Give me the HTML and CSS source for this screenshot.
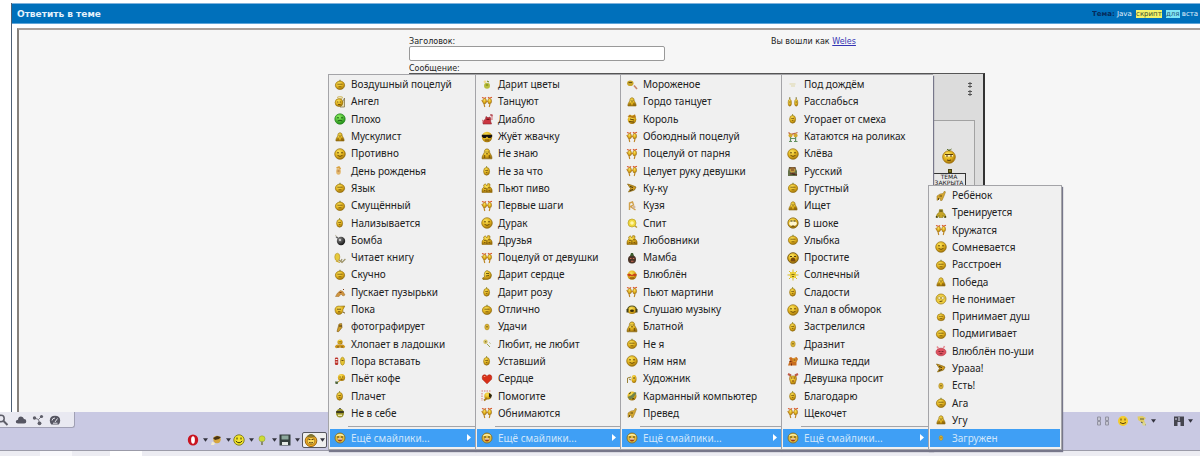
FILE: index.html
```html
<!DOCTYPE html>
<html lang="ru">
<head>
<meta charset="utf-8">
<title>Ответить в теме</title>
<link rel="stylesheet" href="styles.css">
</head>
<body>
<svg class="sprite" aria-hidden="true">
  <defs>
    <radialGradient id="gold" cx="40%" cy="30%" r="75%"><stop offset="0" stop-color="#fbe45c"/><stop offset=".55" stop-color="#e0b01c"/><stop offset="1" stop-color="#96690a"/></radialGradient>
    <radialGradient id="lime" cx="40%" cy="30%" r="75%"><stop offset="0" stop-color="#8cf060"/><stop offset="1" stop-color="#1c8a14"/></radialGradient>
    <radialGradient id="coal" cx="35%" cy="30%" r="75%"><stop offset="0" stop-color="#888"/><stop offset="1" stop-color="#111"/></radialGradient>
  </defs>
  <symbol id="face" viewBox="0 0 12 12"><circle cx="6" cy="6" r="5.3" fill="url(#gold)" stroke="#94700e" stroke-width=".7"/><path d="M3 4.8h2M7 4.8h2M3.500 7.400q2.500 2 5 0" fill="none" stroke="#5c4108" stroke-width=".9"/></symbol>
  <symbol id="mid" viewBox="0 0 12 12"><ellipse cx="6" cy="6.300" rx="4.600" ry="4.200" fill="url(#gold)" stroke="#94700e" stroke-width=".7"/><path d="M3.400 5.200h5.200M4.500 7.800h3" stroke="#6b4b08" stroke-width=".8"/><path d="M6 2V.8" stroke="#6f7a1a"/></symbol>
  <symbol id="small" viewBox="0 0 12 12"><ellipse cx="5.600" cy="6.300" rx="3" ry="3.900" fill="url(#gold)" stroke="#94700e" stroke-width=".6"/><path d="M4.200 5.400h2.800M4.800 7.400h1.600" stroke="#6b4b08" stroke-width=".8"/><path d="M5.600 2.600V1.200" stroke="#8a8a20"/></symbol>
  <symbol id="tiny" viewBox="0 0 12 12"><ellipse cx="6" cy="6" rx="2.200" ry="2.900" fill="#dcb637" stroke="#aa8420" stroke-width=".6"/><path d="M5 5.800h2" stroke="#6b5010" stroke-width=".8"/></symbol>
  <symbol id="pear" viewBox="0 0 12 12"><path d="M6 .9C8.300.9 8.600 3 8.700 4.500 9.500 6.500 11.300 8 10.900 10.800H1.100C.7 8 2.600 6.500 3.300 4.500 3.400 3 3.700.9 6 .9z" fill="url(#gold)" stroke="#8b690d" stroke-width=".7"/><path d="M4.400 4h1.200M6.600 4h1.200M3.700 7v3M8.300 7v3M5 5.800h2" stroke="#694b08" stroke-width=".9"/></symbol>
  <symbol id="pair" viewBox="0 0 12 12"><path d="M1 1.400l3 1L5 1.300M7 1.300l1.300 1 2.700-1" fill="none" stroke="#d9572a" stroke-width="1.100"/><ellipse cx="3.600" cy="5.200" rx="1.900" ry="2.800" fill="url(#gold)" stroke="#a4721a" stroke-width=".5"/><ellipse cx="8.700" cy="5.200" rx="1.900" ry="2.800" fill="url(#gold)" stroke="#a4721a" stroke-width=".5"/><path d="M3 8l.8 3M9 8l-.8 3M5 6l2-1M.8 4l1 2" stroke="#bd8420" stroke-width="1.100"/></symbol>
  <symbol id="duo" viewBox="0 0 12 12"><ellipse cx="2.800" cy="6.700" rx="1.700" ry="3.500" fill="url(#gold)" stroke="#a17d18" stroke-width=".5"/><ellipse cx="9.200" cy="6.700" rx="1.700" ry="3.500" fill="url(#gold)" stroke="#a17d18" stroke-width=".5"/><path d="M2.800 3V1.200M9.200 3V1.200M2 6h1.600M8.400 6H10" stroke="#6f6412" stroke-width=".9"/></symbol>
  <symbol id="friends" viewBox="0 0 12 12"><path d="M1 10.500Q.4 6 3 5l-.4-2L4.400 1.800 5.800 4l1-2.500L9 2l-.2 2.600q3 2 2.300 5.900z" fill="url(#gold)" stroke="#96700f" stroke-width=".6"/><path d="M3 6.300h2M7 5.800h2M5.900 6v4M3 8.600h1.500M7.500 8.600H9" stroke="#71500a" stroke-width=".9"/></symbol>
  <symbol id="wave" viewBox="0 0 12 12"><path d="M1 5q1-3.500 5-2.800L10.800 2 9 5.500q0 5-4.600 5Q1 10 1 5z" fill="url(#gold)" stroke="#91700f" stroke-width=".6"/><path d="M3 5.200h4M4 7.800h2.400M9 8l2 1.200" stroke="#65480b" stroke-width=".9"/></symbol>
  <symbol id="gift" viewBox="0 0 12 12"><path d="M6 1.500q4 1 4.500 4.500 0 4-4 4.500H2L1.500 9l2-1Q2.500 2.500 6 1.500z" fill="url(#gold)" stroke="#88700f" stroke-width=".6"/><path d="M5 4.500h3M5 7l3-.5" stroke="#5e4d0b" stroke-width=".9"/></symbol>
  <symbol id="run" viewBox="0 0 12 12"><circle cx="4" cy="4" r="2.500" fill="#e5b52a"/><path d="M5 5.600l3 1.200 2.800 3M5 6.600L2 10.400M7 7l-1 3.600" fill="none" stroke="#be8b22" stroke-width="1.600"/><path d="M3 3.600h2M9 3l1 1" stroke="#72510c"/></symbol>
  <symbol id="bubbles" viewBox="0 0 12 12"><path d="M1.500 10.500l2-3.500 3-2.500L9 5.500l2 3.500-2 1-2-2-2 2.500z" fill="#cf9440" stroke="#a1702a" stroke-width=".5"/><path d="M5.500 6.500h2M9 3.500h1" stroke="#7b3c12"/></symbol>
  <symbol id="flower" viewBox="0 0 12 12"><circle cx="6" cy="6.700" r="3" fill="#b9bd3c"/><circle cx="4" cy="2.800" r="1.400" fill="#f1dc91"/><path d="M4.800 6h2.400M6 2l2 1" stroke="#697a17"/></symbol>
  <symbol id="angel" viewBox="0 0 12 12"><path d="M10.500 2v9H6z" fill="#e9dfb1" stroke="#837549" stroke-width=".8"/><circle cx="5" cy="6.600" r="3.900" fill="url(#gold)" stroke="#95700e" stroke-width=".6"/><ellipse cx="6" cy="1.600" rx="2.800" ry=".9" fill="none" stroke="#c3a638" stroke-width=".8"/><path d="M3 6h1.400M5.800 6h1.400M4 8.500h2.600" stroke="#60430a" stroke-width=".8"/></symbol>
  <symbol id="green" viewBox="0 0 12 12"><circle cx="6" cy="6" r="5.200" fill="url(#lime)" stroke="#23831b" stroke-width=".7"/><path d="M3 4.800h2M7 4.800h2M3.700 8q2.300-1.600 4.600 0" fill="none" stroke="#17520f" stroke-width=".9"/></symbol>
  <symbol id="devil" viewBox="0 0 12 12"><path d="M2 11Q2 7 4.600 6L5 3.500l2 1.300L9 4q1.500 2 .5 4l1 3z" fill="#cb3540" stroke="#8b252d" stroke-width=".6"/><path d="M11 1v6M9.800 1v1.800h2M1 7l1.600 1M1 9h2" stroke="#cf5b65" stroke-width=".9"/><path d="M5.500 6.300h3" stroke="#5c090e"/></symbol>
  <symbol id="cool" viewBox="0 0 12 12"><circle cx="6" cy="6" r="5.200" fill="url(#gold)"/><path d="M.8 3.800h10.400v1.800L9.600 7H7.300L6 5.400 4.700 7H2.400L.8 5.600z" fill="#171310"/><path d="M4 9h4" stroke="#71490a" stroke-width=".9"/></symbol>
  <symbol id="bomb" viewBox="0 0 12 12"><circle cx="7" cy="7" r="4.200" fill="url(#coal)"/><path d="M3.800 4.200L2 2.600" stroke="#555" stroke-width="1.400"/><path d="M1 1l1.800 1.400" stroke="#c6c1ac"/><circle cx="6" cy="6" r="1.100" fill="#ddd"/></symbol>
  <symbol id="book" viewBox="0 0 12 12"><ellipse cx="3.300" cy="5" rx="2.500" ry="3.800" fill="#e6c93c" stroke="#b08f1f" stroke-width=".6"/><path d="M5 8l3 2.400L11.400 7M7 9l1-2" fill="none" stroke="#9b9268" stroke-width="1.200"/><path d="M2 9l4 1.500" stroke="#cba62a" stroke-width="1.300"/></symbol>
  <symbol id="cam" viewBox="0 0 12 12"><path d="M3 10.500L5 3l2.600-.5.4 4-3.400 4.200z" fill="#cf9e28" stroke="#7d5810" stroke-width=".6"/><path d="M5 5h3" stroke="#44310c"/></symbol>
  <symbol id="clap" viewBox="0 0 12 12"><circle cx="6" cy="4" r="2.600" fill="url(#gold)"/><path d="M.8 8.800q1.400-2.800 4-2h2.400q2.600-.8 4 2-1 2-3 1H3.800q-2 1-3-1z" fill="#cc951e"/><path d="M4.500 3.800h3M4 8v2M8 8v2" stroke="#694707" stroke-width=".8"/></symbol>
  <symbol id="train" viewBox="0 0 12 12"><path d="M1 10.500q.5-4 3-5L4.500 2.500h3l.5 3q2.500 1 3 5l-2-.5L8 8v2.500H4V8l-1 2z" fill="#c7a528" stroke="#7e7512" stroke-width=".5"/><path d="M4.500 4h3M1 9.500l1.500 1M11 9.500l-1.500 1" stroke="#2f3010" stroke-width="1.200"/></symbol>
  <symbol id="wake" viewBox="0 0 12 12"><rect x=".9" y="2.500" width="3.300" height="7.500" rx="1.200" fill="#bc342c"/><path d="M1.500 4.500h2M1.500 7h2" stroke="#fff"/><ellipse cx="8.500" cy="6.200" rx="2" ry="4" fill="#e6c534" stroke="#ae8b16" stroke-width=".7"/><path d="M7.500 5.500h2" stroke="#6b5010"/></symbol>
  <symbol id="coffee" viewBox="0 0 12 12"><circle cx="7.500" cy="4.500" r="3.600" fill="url(#gold)"/><path d="M5.500 4h1.300M8 4h1.300M6.500 6.200h2" stroke="#5e430b" stroke-width=".9"/><path d="M1 8.500h3.300l-.6 2.500H1.600z" fill="#52683e"/><path d="M4 9l2-1.500" stroke="#c99f23"/></symbol>
  <symbol id="crazy" viewBox="0 0 12 12"><ellipse cx="6" cy="6.200" rx="4" ry="4.400" fill="#98922b"/><path d="M2.200 4h7.600v2H2.200z" fill="#3c3b20"/><path d="M4 8.300h4" stroke="#eee9b0" stroke-width="1.500"/><path d="M5 1.500h2" stroke="#666"/></symbol>
  <symbol id="heart" viewBox="0 0 12 12"><path d="M6 10.800L1.500 6.300Q.5 2 3.500 1.800 5.300 1.800 6 3.400 6.700 1.800 8.500 1.800 11.500 2 10.500 6.300z" fill="#d82f18" stroke="#a71c0d" stroke-width=".6"/><path d="M2.800 3.500h1.500" stroke="#ff9a72"/></symbol>
  <symbol id="help" viewBox="0 0 12 12"><path d="M.5 1h9M1 3v8" stroke="#d8746e" stroke-dasharray="1.500 1"/><circle cx="6.800" cy="6" r="3.500" fill="url(#gold)"/><path d="M8 3l3 2-1 3-2-1z" fill="#2c2510"/><path d="M3 10.500L6 8" stroke="#a87a1b" stroke-width="1.800"/></symbol>
  <symbol id="party" viewBox="0 0 12 12"><ellipse cx="4.500" cy="6.500" rx="2.300" ry="3.300" fill="#e3b66a"/><path d="M2.500 3L5 2l1.500 2" stroke="#d9a13f" stroke-width="1.500" fill="none"/><path d="M3.500 6h2" stroke="#a36a3c"/></symbol>
  <symbol id="daisy" viewBox="0 0 12 12"><circle cx="4.500" cy="3.800" r="2.200" fill="#d8c465"/><path d="M6 6l3 3M8.500 4.500l.8 1" stroke="#9ca35a" stroke-width="1"/><path d="M4 3.800h1.300" stroke="#6b6230"/></symbol>
  <symbol id="ice" viewBox="0 0 12 12"><ellipse cx="4.300" cy="4.300" rx="3.200" ry="2.800" fill="#c8a52b"/><path d="M2.600 3.500h3.500" stroke="#665012"/><path d="M8 6.500l3 3.500" stroke="#c78568" stroke-width="1.600"/></symbol>
  <symbol id="crown" viewBox="0 0 12 12"><circle cx="6" cy="6.600" r="4.300" fill="url(#gold)"/><path d="M1.500 3.500L4 1.500l2 1.700 3-2 1 3.300-3.500.5z" fill="#b77a12"/><path d="M4 6l4 1M3 8.500l5 .6" stroke="#5c3f09"/></symbol>
  <symbol id="bird" viewBox="0 0 12 12"><path d="M1.500 2l5 1.500 3.500 1.500L8.500 8 2.500 10l2-3.500z" fill="#cf9a20" stroke="#826009" stroke-width=".7"/><path d="M4 4.500l3 1M4 8.500l3-1" stroke="#3e350f"/></symbol>
  <symbol id="bear" viewBox="0 0 12 12"><path d="M2 10.500V6l3-2 3-.5L9.500 1l1 1-1.500 4-2 4.500H5.500L5 8z" fill="#d3a630" stroke="#96731c" stroke-width=".5"/><path d="M4.500 6h2.500M3.500 8v2" stroke="#5f4a10"/></symbol>
  <symbol id="kuzya" viewBox="0 0 12 12"><path d="M3.500 10V3l3-1 1 3-3 1.500L9.500 10" fill="none" stroke="#d1a14b" stroke-width="1.400"/><circle cx="8" cy="7" r="1.500" fill="#d5b9a1"/></symbol>
  <symbol id="sleep" viewBox="0 0 12 12"><circle cx="6" cy="6" r="4" fill="#f0d83c" stroke="#b89d26" stroke-width=".7"/><circle cx="6" cy="6" r="1.800" fill="#fff6a9"/><path d="M9 9l2 1.500" stroke="#bc9a32" stroke-width="1.500"/></symbol>
  <symbol id="mamba" viewBox="0 0 12 12"><circle cx="6" cy="7.500" r="4" fill="#4b3427"/><path d="M4 4l1-3h2l1 3z" fill="#3c5a2e"/><path d="M4 6.500h1.500M6.800 6.500h1.500M5 9.200h2.500" stroke="#ce6a54" stroke-width="1.100"/></symbol>
  <symbol id="love" viewBox="0 0 12 12"><circle cx="6" cy="6.200" r="4.600" fill="url(#gold)"/><path d="M1 5.500l2.500-1L6 6l2.500-1.500 2.500 1L9 7.500 7 6.800 6 7.500 5 6.800 3 7.500z" fill="#c9431b"/><path d="M4 9h4" stroke="#843f0a"/></symbol>
  <symbol id="music" viewBox="0 0 12 12"><ellipse cx="6" cy="6.200" rx="4.800" ry="3.900" fill="url(#gold)"/><path d="M1.500 6Q2 2 6 2t4.500 4" fill="none" stroke="#55521a" stroke-width="1.200"/><path d="M1.500 5v3.500M10.500 5v3.500" stroke="#45421a" stroke-width="2"/><ellipse cx="6" cy="6.800" rx="2" ry="1.300" fill="#392c0a"/></symbol>
  <symbol id="artist" viewBox="0 0 12 12"><ellipse cx="8" cy="6" rx="2.500" ry="4" fill="url(#gold)"/><path d="M1.500 10V5L5 4M5 7L3 6" fill="none" stroke="#9a8236" stroke-width="1"/><path d="M7 5h2" stroke="#5b4208"/></symbol>
  <symbol id="pda" viewBox="0 0 12 12"><circle cx="6" cy="6" r="4.500" fill="url(#gold)"/><path d="M1.500 7L5 5.500 9 2l1.500 1-3 4.500-3.500 2z" fill="#71844c"/><path d="M3 4l2-1.500M6 9l2-.5" stroke="#433d12"/></symbol>
  <symbol id="rain" viewBox="0 0 12 12"><path d="M2.500 5h6M4 7h4" stroke="#ded7a9"/></symbol>
  <symbol id="soldier" viewBox="0 0 12 12"><path d="M1 6l1-4h6l2 4v5H1z" fill="#66714a"/><circle cx="5.500" cy="5" r="2.800" fill="#c19b3f"/><path d="M2 3h7M4 5h3M3 9l3-1 4 2" stroke="#6e3b28" stroke-width="1.100"/></symbol>
  <symbol id="shock" viewBox="0 0 12 12"><circle cx="6" cy="6" r="5.200" fill="url(#gold)" stroke="#7c5e12" stroke-width=".7"/><ellipse cx="6" cy="6.500" rx="3.800" ry="2.300" fill="#fff6cf"/><path d="M3.500 4h2M6.500 4h2" stroke="#333"/><path d="M4 9.500q2-2 4 0z" fill="#3e2b06"/></symbol>
  <symbol id="more" viewBox="0 0 12 12"><circle cx="6" cy="6" r="5" fill="#e2b93a" stroke="#7c6a22" stroke-width=".8"/><path d="M2.500 3.800q3.500-2 7 0" stroke="#fbefa4" stroke-width="1.400" fill="none"/><path d="M3 5h2M7 5h2" stroke="#4d3b0c"/><path d="M3.500 6.800h5q-.3 2.700-2.500 2.700T3.500 6.800z" fill="#9a3a16"/><path d="M4 7h4" stroke="#fff"/></symbol>
  <symbol id="cry" viewBox="0 0 12 12"><circle cx="6" cy="6" r="5.300" fill="url(#gold)" stroke="#73560e" stroke-width=".9"/><path d="M3 4.500h2M7 4.500h2" stroke="#53400c"/><path d="M3.500 9.500q0-4 2.500-4t2.500 4z" fill="#7a4a0b"/></symbol>
  <symbol id="sun" viewBox="0 0 12 12"><path d="M6 .5v11M.5 6h11M2 2l8 8M10 2l-8 8" stroke="#dbbd25" stroke-width="1"/><circle cx="6" cy="6" r="3.200" fill="#edcf35"/><path d="M4.500 5.500h3M5 7.500h2" stroke="#6c5a10" stroke-width=".8"/></symbol>
  <symbol id="teddy" viewBox="0 0 12 12"><path d="M1 10.500L3 5l-1-2 2-1 2 1.500L9.500 2l1.500 2-1.500 3v3.500z" fill="#c86d20"/><circle cx="7.500" cy="5" r="2" fill="#e0a32c"/><path d="M2.500 6.500h2M6.500 5h2M4.500 8.500v2" stroke="#7b2c12"/></symbol>
  <symbol id="girl" viewBox="0 0 12 12"><path d="M1 1l3 1.500M11 1L8 2.500" stroke="#bf5946" stroke-width="2"/><path d="M3 3h6l.5 3L8 11H4L2.500 6z" fill="url(#gold)" stroke="#986419" stroke-width=".6"/><path d="M4 5h1.500M6.500 5H8M5 8h2" stroke="#7b3a12"/></symbol>
  <symbol id="skate" viewBox="0 0 12 12"><path d="M1.500 1.500L4 3.500l4-1 2.500-1" stroke="#be6440" stroke-width="1.300" fill="none"/><circle cx="3.500" cy="4.500" r="2" fill="#d3a82e"/><circle cx="8.600" cy="4.500" r="2" fill="#d3a82e"/><path d="M3.500 6v5M8.600 6v5M2 10.500h3M7 10.500h3.500M3.500 7.500h5" stroke="#629060" stroke-width="1.200"/></symbol>
  <symbol id="pink" viewBox="0 0 12 12"><ellipse cx="6" cy="7" rx="5" ry="3.800" fill="#dd5260" stroke="#b72d3e" stroke-width=".6"/><path d="M2 1.500l1.500 2M9.500 1l-1 2" stroke="#e58992" stroke-width="1.500"/><path d="M3.500 6.500h2M6.500 6.500h2M4.500 8.700h3" stroke="#7e2631"/></symbol>
  <symbol id="doubt" viewBox="0 0 12 12"><circle cx="6" cy="6" r="5" fill="#f0cf40" stroke="#a38217" stroke-width=".8"/><circle cx="4.200" cy="5" r="1.400" fill="#fff4c4" stroke="#8b741c" stroke-width=".5"/><circle cx="7.800" cy="5" r="1.400" fill="#fff4c4" stroke="#8b741c" stroke-width=".5"/><path d="M4.500 8.600L7.500 8" stroke="#654c09"/></symbol>
  <symbol id="grin" viewBox="0 0 14 14"><circle cx="7" cy="7.800" r="5.800" fill="#f2a81f" stroke="#8f5d0c" stroke-width=".9"/><path d="M2.500 4.500Q4 1 7 1t4.500 3.500Q7 2.800 2.500 4.500z" fill="#7e7434"/><ellipse cx="7" cy="8" rx="3.900" ry="3.600" fill="#fbd95a" stroke="#7c5710" stroke-width=".6"/><path d="M4.500 6.500h2M7.500 6.500h2M5 9.500q2 1 4 0" fill="none" stroke="#5d3f0b"/></symbol>
  <symbol id="arrow" viewBox="0 0 4 7"><path d="M0 0l4 3.500L0 7z" fill="currentColor"/></symbol>
  <symbol id="caret" viewBox="0 0 6 4"><path d="M0 0h6L3 4z" fill="#33333f"/></symbol>
  <symbol id="smile" viewBox="0 0 12 12"><circle cx="6" cy="6" r="5.200" fill="#f4e52b" stroke="#77751c" stroke-width=".9"/><path d="M4 3.500v2M8 3.500v2M2.800 7q3.200 3.600 6.400 0" fill="none" stroke="#333008" stroke-width="1"/></symbol>
  <symbol id="mark" viewBox="0 0 4 6"><path d="M2 0v6M0 1.500h4M0 4.500h4" stroke="#555"/></symbol>
</svg>

<main class="frame">
  <header class="bar">
    <h1 class="bar-title">Ответить в теме</h1>
    <p class="topic"><b>Тема:</b> Java <mark class="hit-yellow">скрипт</mark> <mark class="hit-cyan">для</mark> вста</p>
  </header>
  <form class="panel">
    <div class="fields">
      <label class="label" for="subject">Заголовок:</label>
      <input class="subject" id="subject" type="text">
      <span class="label label-message">Сообщение:</span>
    </div>
    <p class="login">Вы вошли как <a href="#weles">Weles</a></p>
    <section class="editor">
      <div class="marks">
        <svg class="mark"><use href="#mark"/></svg>
        <svg class="mark"><use href="#mark"/></svg>
      </div>
      <div class="smileys">
        <svg class="smiley" viewBox="0 0 14 16"><circle cx="7" cy="9" r="6.300" fill="url(#gold)" stroke="#a6720b" stroke-width=".8"/><path d="M5 1l2 2 2.500-2M7 1v2" stroke="#61702a" fill="none"/><path d="M3 7.500h8" stroke="#fff3be" stroke-width="2"/><path d="M3 6.500h8M4 8h2M8 8h2M5 12q2 1 4 0" stroke="#5b3d08" fill="none"/></svg>
        <svg class="head" viewBox="0 0 6 4"><path d="M1 0h4v4H1z" fill="#4a420f"/><path d="M2 2h2" stroke="#c9b83c"/></svg>
        <p class="sign">ТЕМА ЗАКРЫТА</p>
      </div>
    </section>
  </form>
</main>

<footer class="dock">
  <div class="tabs">
    <button class="tool" type="button" aria-label="Поиск"><svg class="tab-icon tab-search" viewBox="0 0 12 12"><circle cx="4" cy="4.500" r="3.200" fill="none" stroke="#5d5d68" stroke-width="1.500"/><path d="M6.500 7l4 4" stroke="#5d5d68" stroke-width="2"/></svg></button>
    <button class="tool" type="button" aria-label="Облако"><svg class="tab-icon" viewBox="0 0 12 12"><path d="M3 9.500Q.6 9.500.8 7.500 1 5.800 3 5.800 3.200 2.500 6 2.500 8.300 2.500 9 5q2.300 0 2.300 2.300T9 9.500z" fill="#565662"/></svg></button>
    <button class="tool" type="button" aria-label="Связь"><svg class="tab-icon" viewBox="0 0 12 12"><path d="M2.500 4l4 1.500 3-3M6.500 5.500l1 4" stroke="#777782" fill="none"/><circle cx="2.500" cy="4" r="1.700" fill="#5d5d68"/><circle cx="9.500" cy="2.500" r="1.600" fill="#5d5d68"/><circle cx="7.500" cy="9.300" r="1.900" fill="#5d5d68"/></svg></button>
    <button class="tool" type="button" aria-label="Турбо"><svg class="tab-icon" viewBox="0 0 12 12"><path d="M2.300 10.500Q.8 8.800.8 6.700.8 1.700 6 1.700t5.200 5q0 2.100-1.500 3.800z" fill="#565662"/><path d="M3 6.500Q3.300 4 6 4M6 8l2.500-3.500M4 9.200h4.500" stroke="#e6e6ee" fill="none"/></svg></button>
  </div>
  <div class="quick">
    <button class="tool" type="button" aria-label="Опера"><svg class="icon" viewBox="0 0 12 12"><ellipse cx="6" cy="6" rx="5.200" ry="5.600" fill="#c91420"/><ellipse cx="6" cy="6" rx="1.900" ry="3.700" fill="#fff"/></svg><svg class="caret"><use href="#caret"/></svg></button>
    <button class="tool" type="button" aria-label="Правка"><svg class="icon" viewBox="0 0 12 12"><circle cx="7" cy="5.500" r="3.700" fill="#d6a63d"/><path d="M3 4l4-2 4 1-2 2-4 1z" fill="#493414"/><path d="M1 11l1-3.500 3 1.500L4 11z" fill="#f3ebd0"/></svg><svg class="caret"><use href="#caret"/></svg></button>
    <button class="tool" type="button" aria-label="Смайлы"><svg class="icon"><use href="#smile"/></svg><svg class="caret"><use href="#caret"/></svg></button>
    <button class="tool" type="button" aria-label="Идея"><svg class="icon" viewBox="0 0 12 12"><circle cx="6" cy="4.800" r="3" fill="#cddb35" stroke="#94a52c" stroke-width=".6"/><path d="M6 7.500v3.500" stroke="#8a8a70" stroke-width="2"/></svg><svg class="caret"><use href="#caret"/></svg></button>
    <button class="tool" type="button" aria-label="Сохранить"><svg class="icon" viewBox="0 0 12 12"><path d="M.5.500h11v11H.5z" fill="#333d3c"/><path d="M2.500 1.500h7v4h-7z" fill="#8ba79b"/><path d="M3 8h6v3H3z" fill="#e3e8e4"/></svg><svg class="caret"><use href="#caret"/></svg></button>
    <button class="tool tool-open" type="button" aria-label="Смайлики"><svg class="icon-big"><use href="#grin"/></svg><svg class="caret"><use href="#caret"/></svg></button>
  </div>
  <div class="side">
    <svg class="grip" viewBox="0 0 14 10"><path d="M1.500 1h3v3.500h-3zM1.500 5.500h3V9h-3zM9.500 1h3v3.500h-3zM9.500 5.500h3V9h-3z" fill="#c6c6d2" stroke="#9292a2"/></svg>
    <button class="tool" type="button" aria-label="Смайл"><svg class="side-icon" viewBox="0 0 12 12"><circle cx="6" cy="6" r="5" fill="#f3cc2e"/><path d="M4 3.500v2M8 3.500v2M3 7.500q3 2.500 6 0" stroke="#5d450c" fill="none"/></svg></button>
    <button class="tool" type="button" aria-label="Цвет"><svg class="side-icon" viewBox="0 0 12 12"><path d="M1.500 1.500l5-.5 3.500 2-2 2 1 3-4-1-3-2z" fill="#e1cc62"/><path d="M4 4h4M5 7l5 3" stroke="#5f5d30"/><circle cx="8" cy="9" r="1.800" fill="#ddd78a"/></svg><svg class="caret"><use href="#caret"/></svg></button>
    <button class="tool" type="button" aria-label="Вид"><svg class="side-icon" viewBox="0 0 12 12"><path d="M1 1.500h10V11H7.500V7h-3v4H1z" fill="#45454f"/><path d="M6 2v4M3 3v2" stroke="#c5c5d6" stroke-width="1.200"/></svg><svg class="caret"><use href="#caret"/></svg></button>
  </div>
</footer>
<div class="taskbar"><span class="task"></span><span class="task task-active"></span></div>

<nav class="menus" aria-label="Смайлики">
  <section class="menu menu-a">
    <ul class="list">
      <li><button class="item"><svg class="icon"><use href="#mid"/></svg>Воздушный поцелуй</button></li>
      <li><button class="item"><svg class="icon"><use href="#angel"/></svg>Ангел</button></li>
      <li><button class="item"><svg class="icon"><use href="#green"/></svg>Плохо</button></li>
      <li><button class="item"><svg class="icon icon-less"><use href="#pear"/></svg>Мускулист</button></li>
      <li><button class="item"><svg class="icon"><use href="#face"/></svg>Противно</button></li>
      <li><button class="item"><svg class="icon"><use href="#party"/></svg>День рожденья</button></li>
      <li><button class="item"><svg class="icon"><use href="#mid"/></svg>Язык</button></li>
      <li><button class="item"><svg class="icon"><use href="#mid"/></svg>Смущённый</button></li>
      <li><button class="item"><svg class="icon"><use href="#small"/></svg>Нализывается</button></li>
      <li><button class="item"><svg class="icon"><use href="#bomb"/></svg>Бомба</button></li>
      <li><button class="item"><svg class="icon"><use href="#book"/></svg>Читает книгу</button></li>
      <li><button class="item"><svg class="icon"><use href="#mid"/></svg>Скучно</button></li>
      <li><button class="item"><svg class="icon"><use href="#bubbles"/></svg>Пускает пузырьки</button></li>
      <li><button class="item"><svg class="icon"><use href="#wave"/></svg>Пока</button></li>
      <li><button class="item"><svg class="icon"><use href="#cam"/></svg>фотографирует</button></li>
      <li><button class="item"><svg class="icon"><use href="#clap"/></svg>Хлопает в ладошки</button></li>
      <li><button class="item"><svg class="icon"><use href="#wake"/></svg>Пора вставать</button></li>
      <li><button class="item"><svg class="icon"><use href="#coffee"/></svg>Пьёт кофе</button></li>
      <li><button class="item"><svg class="icon"><use href="#small"/></svg>Плачет</button></li>
      <li><button class="item"><svg class="icon"><use href="#crazy"/></svg>Не в себе</button></li>
    </ul>
    <hr class="rule">
    <button class="item item-on"><svg class="icon"><use href="#more"/></svg>Ещё смайлики...<svg class="arrow"><use href="#arrow"/></svg></button>
  </section>

  <section class="menu menu-b">
    <ul class="list">
      <li><button class="item"><svg class="icon"><use href="#flower"/></svg>Дарит цветы</button></li>
      <li><button class="item"><svg class="icon"><use href="#pair"/></svg>Танцуют</button></li>
      <li><button class="item"><svg class="icon"><use href="#devil"/></svg>Диабло</button></li>
      <li><button class="item"><svg class="icon"><use href="#cool"/></svg>Жуёт жвачку</button></li>
      <li><button class="item"><svg class="icon"><use href="#pear"/></svg>Не знаю</button></li>
      <li><button class="item"><svg class="icon"><use href="#small"/></svg>Не за что</button></li>
      <li><button class="item"><svg class="icon"><use href="#friends"/></svg>Пьют пиво</button></li>
      <li><button class="item"><svg class="icon"><use href="#pair"/></svg>Первые шаги</button></li>
      <li><button class="item"><svg class="icon"><use href="#face"/></svg>Дурак</button></li>
      <li><button class="item"><svg class="icon"><use href="#friends"/></svg>Друзья</button></li>
      <li><button class="item"><svg class="icon"><use href="#pair"/></svg>Поцелуй от девушки</button></li>
      <li><button class="item"><svg class="icon"><use href="#gift"/></svg>Дарит сердце</button></li>
      <li><button class="item"><svg class="icon"><use href="#small"/></svg>Дарит розу</button></li>
      <li><button class="item"><svg class="icon"><use href="#mid"/></svg>Отлично</button></li>
      <li><button class="item"><svg class="icon"><use href="#tiny"/></svg>Удачи</button></li>
      <li><button class="item"><svg class="icon"><use href="#daisy"/></svg>Любит, не любит</button></li>
      <li><button class="item"><svg class="icon"><use href="#small"/></svg>Уставший</button></li>
      <li><button class="item"><svg class="icon"><use href="#heart"/></svg>Сердце</button></li>
      <li><button class="item"><svg class="icon"><use href="#help"/></svg>Помогите</button></li>
      <li><button class="item"><svg class="icon"><use href="#pair"/></svg>Обнимаются</button></li>
    </ul>
    <hr class="rule">
    <button class="item item-on"><svg class="icon"><use href="#more"/></svg>Ещё смайлики...<svg class="arrow"><use href="#arrow"/></svg></button>
  </section>

  <section class="menu menu-c">
    <ul class="list">
      <li><button class="item"><svg class="icon"><use href="#ice"/></svg>Мороженое</button></li>
      <li><button class="item"><svg class="icon icon-less"><use href="#pear"/></svg>Гордо танцует</button></li>
      <li><button class="item"><svg class="icon"><use href="#crown"/></svg>Король</button></li>
      <li><button class="item"><svg class="icon"><use href="#pair"/></svg>Обоюдный поцелуй</button></li>
      <li><button class="item"><svg class="icon"><use href="#pair"/></svg>Поцелуй от парня</button></li>
      <li><button class="item"><svg class="icon"><use href="#pair"/></svg>Целует руку девушки</button></li>
      <li><button class="item"><svg class="icon"><use href="#bird"/></svg>Ку-ку</button></li>
      <li><button class="item"><svg class="icon"><use href="#kuzya"/></svg>Кузя</button></li>
      <li><button class="item"><svg class="icon"><use href="#sleep"/></svg>Спит</button></li>
      <li><button class="item"><svg class="icon"><use href="#friends"/></svg>Любовники</button></li>
      <li><button class="item"><svg class="icon"><use href="#mamba"/></svg>Мамба</button></li>
      <li><button class="item"><svg class="icon"><use href="#love"/></svg>Влюблён</button></li>
      <li><button class="item"><svg class="icon"><use href="#pair"/></svg>Пьют мартини</button></li>
      <li><button class="item"><svg class="icon"><use href="#music"/></svg>Слушаю музыку</button></li>
      <li><button class="item"><svg class="icon"><use href="#pear"/></svg>Блатной</button></li>
      <li><button class="item"><svg class="icon"><use href="#mid"/></svg>Не я</button></li>
      <li><button class="item"><svg class="icon"><use href="#face"/></svg>Ням ням</button></li>
      <li><button class="item"><svg class="icon"><use href="#artist"/></svg>Художник</button></li>
      <li><button class="item"><svg class="icon"><use href="#pda"/></svg>Карманный компьютер</button></li>
      <li><button class="item"><svg class="icon"><use href="#bear"/></svg>Превед</button></li>
    </ul>
    <hr class="rule">
    <button class="item item-on"><svg class="icon"><use href="#more"/></svg>Ещё смайлики...<svg class="arrow"><use href="#arrow"/></svg></button>
  </section>

  <section class="menu menu-d">
    <ul class="list">
      <li><button class="item"><svg class="icon"><use href="#rain"/></svg>Под дождём</button></li>
      <li><button class="item"><svg class="icon"><use href="#duo"/></svg>Расслабься</button></li>
      <li><button class="item"><svg class="icon"><use href="#small"/></svg>Угорает от смеха</button></li>
      <li><button class="item"><svg class="icon"><use href="#skate"/></svg>Катаются на роликах</button></li>
      <li><button class="item"><svg class="icon"><use href="#face"/></svg>Клёва</button></li>
      <li><button class="item"><svg class="icon"><use href="#soldier"/></svg>Русский</button></li>
      <li><button class="item"><svg class="icon"><use href="#mid"/></svg>Грустный</button></li>
      <li><button class="item"><svg class="icon icon-less"><use href="#pear"/></svg>Ищет</button></li>
      <li><button class="item"><svg class="icon"><use href="#shock"/></svg>В шоке</button></li>
      <li><button class="item"><svg class="icon"><use href="#mid"/></svg>Улыбка</button></li>
      <li><button class="item"><svg class="icon"><use href="#cry"/></svg>Простите</button></li>
      <li><button class="item"><svg class="icon"><use href="#sun"/></svg>Солнечный</button></li>
      <li><button class="item"><svg class="icon"><use href="#small"/></svg>Сладости</button></li>
      <li><button class="item"><svg class="icon"><use href="#face"/></svg>Упал в обморок</button></li>
      <li><button class="item"><svg class="icon"><use href="#small"/></svg>Застрелился</button></li>
      <li><button class="item"><svg class="icon"><use href="#tiny"/></svg>Дразнит</button></li>
      <li><button class="item"><svg class="icon"><use href="#teddy"/></svg>Мишка тедди</button></li>
      <li><button class="item"><svg class="icon"><use href="#girl"/></svg>Девушка просит</button></li>
      <li><button class="item"><svg class="icon"><use href="#small"/></svg>Благодарю</button></li>
      <li><button class="item"><svg class="icon"><use href="#pair"/></svg>Щекочет</button></li>
    </ul>
    <hr class="rule">
    <button class="item item-on"><svg class="icon"><use href="#more"/></svg>Ещё смайлики...<svg class="arrow"><use href="#arrow"/></svg></button>
  </section>

  <section class="menu menu-e">
    <ul class="list list-short">
      <li><button class="item"><svg class="icon"><use href="#bear"/></svg>Ребёнок</button></li>
      <li><button class="item"><svg class="icon"><use href="#train"/></svg>Тренируется</button></li>
      <li><button class="item"><svg class="icon"><use href="#pair"/></svg>Кружатся</button></li>
      <li><button class="item"><svg class="icon"><use href="#face"/></svg>Сомневается</button></li>
      <li><button class="item"><svg class="icon"><use href="#mid"/></svg>Расстроен</button></li>
      <li><button class="item"><svg class="icon icon-less"><use href="#pear"/></svg>Победа</button></li>
      <li><button class="item"><svg class="icon"><use href="#doubt"/></svg>Не понимает</button></li>
      <li><button class="item"><svg class="icon icon-less"><use href="#mid"/></svg>Принимает душ</button></li>
      <li><button class="item"><svg class="icon"><use href="#mid"/></svg>Подмигивает</button></li>
      <li><button class="item"><svg class="icon"><use href="#pink"/></svg>Влюблён по-уши</button></li>
      <li><button class="item"><svg class="icon"><use href="#bird"/></svg>Урааа!</button></li>
      <li><button class="item"><svg class="icon"><use href="#tiny"/></svg>Есть!</button></li>
      <li><button class="item"><svg class="icon"><use href="#mid"/></svg>Ага</button></li>
      <li><button class="item"><svg class="icon icon-less"><use href="#pear"/></svg>Угу</button></li>
    </ul>
    <button class="item item-on"><svg class="icon icon-less"><use href="#tiny"/></svg>Загружен</button>
  </section>
</nav>
</body>
</html>
```

FILE: styles.css
```css
* { box-sizing: border-box; }

body {
  margin: 0;
  min-height: 100vh;
  display: flex;
  flex-direction: column;
  position: relative;
  overflow-x: hidden;
  background: #fff;
  color: #222;
  font: 8px/10px "DejaVu Sans", sans-serif;
}

p, h1, ul { margin: 0; padding: 0; }
svg { display: block; flex: none; }
.sprite { position: absolute; width: 0; height: 0; }

button {
  border: 0;
  padding: 0;
  background: none;
  color: inherit;
  font: inherit;
}

/* Forum frame */
.frame {
  flex: 1;
  display: flex;
  flex-direction: column;
  margin: 3px 0 0 11px;
  border-left: 1px solid #4e6076;
}

.bar {
  display: flex;
  justify-content: space-between;
  align-items: center;
  height: 21px;
  padding-left: 5px;
  border-top: 1px solid #7fb2dc;
  border-bottom: 1px solid #5fa5d8;
  background: #0070bb;
  color: #e4f2fb;
}

.bar-title { font-size: 9px; line-height: 12px; }

.topic {
  width: 108px;
  overflow: hidden;
  white-space: nowrap;
  font-size: 7px;
  line-height: 8px;
}
.topic b { color: #062c5c; }
.topic mark { margin-left: 2px; }
.hit-yellow { background: #f3f36a; color: #3a4a2c; }
.hit-cyan { background: #7fe6f6; color: #1f5b7c; }

.panel {
  flex: 1;
  display: grid;
  grid-template-columns: 256px 1fr;
  grid-template-rows: auto 1fr;
  column-gap: 106px;
  margin: 4px 0 0 5px;
  padding: 7px 0 0 390px;
  border-top: 2px solid #aaa09a;
  border-left: 2px solid #84807c;
  background: #f6f6f6;
}

.fields { display: flex; flex-direction: column; }
.label { line-height: 9px; }
.label-message { margin-top: 3px; }
.subject {
  width: 100%;
  height: 15px;
  padding: 0 4px;
  border: 1px solid #999;
  border-radius: 2px;
  background: #fff;
  font-size: 9px;
}
.login { line-height: 9px; }
.login a { color: #3434b4; }

.editor {
  grid-column: 1 / -1;
  width: 576px;
  display: flex;
  flex-direction: column;
  border: 1px solid #555;
  border-right: 2px solid #333;
  background: #dcdcdc;
}
.marks {
  display: flex;
  flex-direction: column;
  align-items: flex-end;
  gap: 2px;
  height: 46px;
  padding: 8px 11px 0 0;
}
.mark { width: 4px; height: 6px; }
.smileys {
  flex: 1;
  display: flex;
  flex-direction: column;
  align-items: flex-end;
  margin-right: 8px;
  padding: 27px 8px 0 0;
  border-top: 1px solid #a2a2a2;
  border-right: 1px solid #a2a2a2;
  background: #e3e3e3;
}
.smiley { width: 14px; height: 16px; margin-right: 10px; }
.head { width: 6px; height: 4px; margin: 5px 13px 0 0; }
.sign {
  width: 34px;
  border: 1px solid #333;
  background: #e8e8e8;
  text-align: center;
  font-size: 6px;
  line-height: 6px;
}

/* Browser toolbars */
.dock {
  display: flex;
  align-items: flex-start;
  height: 38px;
  background: #c9c9e3;
}
.tabs {
  display: flex;
  align-items: center;
  gap: 5px;
  width: 75px;
  height: 16px;
  border-right: 1px solid #a0a0b4;
  border-bottom: 1px solid #a0a0b4;
  border-bottom-right-radius: 3px;
  background: #e9e9f1;
}
.tool { display: flex; align-items: center; gap: 3px; }
.tab-icon { width: 12px; height: 12px; }
.tab-search { width: 14px; margin-left: -4px; }
.quick {
  align-self: flex-end;
  display: flex;
  align-items: center;
  gap: 2px;
  margin: 0 0 2px 112px;
}
.caret { width: 6px; height: 4px; }
.quick .caret, .side .caret { width: 5px; }
.quick .tool { gap: 4px; }
.quick .tool-open {
  width: 25px;
  height: 16px;
  justify-content: center;
  gap: 2px;
  border: 1px solid #55555f;
  border-radius: 2px;
  background: #efefef;
}
.icon-big { width: 14px; height: 14px; }
.side {
  display: flex;
  align-items: center;
  gap: 7px;
  margin-left: auto;
  padding: 3px 7px 0 0;
}
.grip { width: 14px; height: 10px; }
.side-icon { width: 12px; height: 12px; }
.side .tool:last-child { margin-left: 10px; }

.taskbar {
  display: flex;
  gap: 38px;
  height: 6px;
  padding-left: 40px;
  border-top: 1px solid #9b9ba8;
  background: #ececf2;
}
.task { width: 32px; background: #f8f8fb; }
.task-active { background: #fff; }

/* Cascading smiley menus */
.menus {
  position: absolute;
  left: 328px;
  bottom: 6px;
  display: flex;
  align-items: flex-end;
  color: #222;
  font: 10px/15px "Noto Sans", "Open Sans", sans-serif;
}
.menu {
  display: flex;
  flex-direction: column;
  padding: 1px 0 2px 1px;
  border: 1px solid #a4a4a8;
  border-right: 0;
  background: #f0f0f0;
  box-shadow: 1px 2px 1px #77778a;
}
.menu-a { width: 147px; }
.menu-b { width: 145px; }
.menu-c { width: 161px; }
.menu-d { width: 152px; }
.menu-e {
  width: 134px;
  margin-left: -5px;
  padding-right: 1px;
  border-right: 1px solid #a4a4a8;
  z-index: 1;
}
.list {
  display: grid;
  grid-auto-rows: 1fr;
  min-height: 346px;
  list-style: none;
}
.list-short { min-height: 242px; }
.list li { display: flex; }
.item {
  display: flex;
  align-items: center;
  gap: 5px;
  width: 100%;
  padding-left: 4px;
  white-space: nowrap;
  text-align: left;
}
.menu-e .item { padding-left: 5px; }
.icon { width: 12px; height: 12px; }
.icon-less { padding: 1px; }
.rule {
  width: calc(100% - 18px);
  height: 1px;
  margin: 4px 0 2px 18px;
  border: 0;
  background: #a4a4a8;
}
.item-on {
  height: 18px;
  background: #3f9ff5;
  color: #cfe6fb;
}
.arrow {
  width: 4px;
  height: 7px;
  margin: 0 4px 2px auto;
  color: #fff;
}
.menu-d .arrow { margin-right: 9px; }
```
